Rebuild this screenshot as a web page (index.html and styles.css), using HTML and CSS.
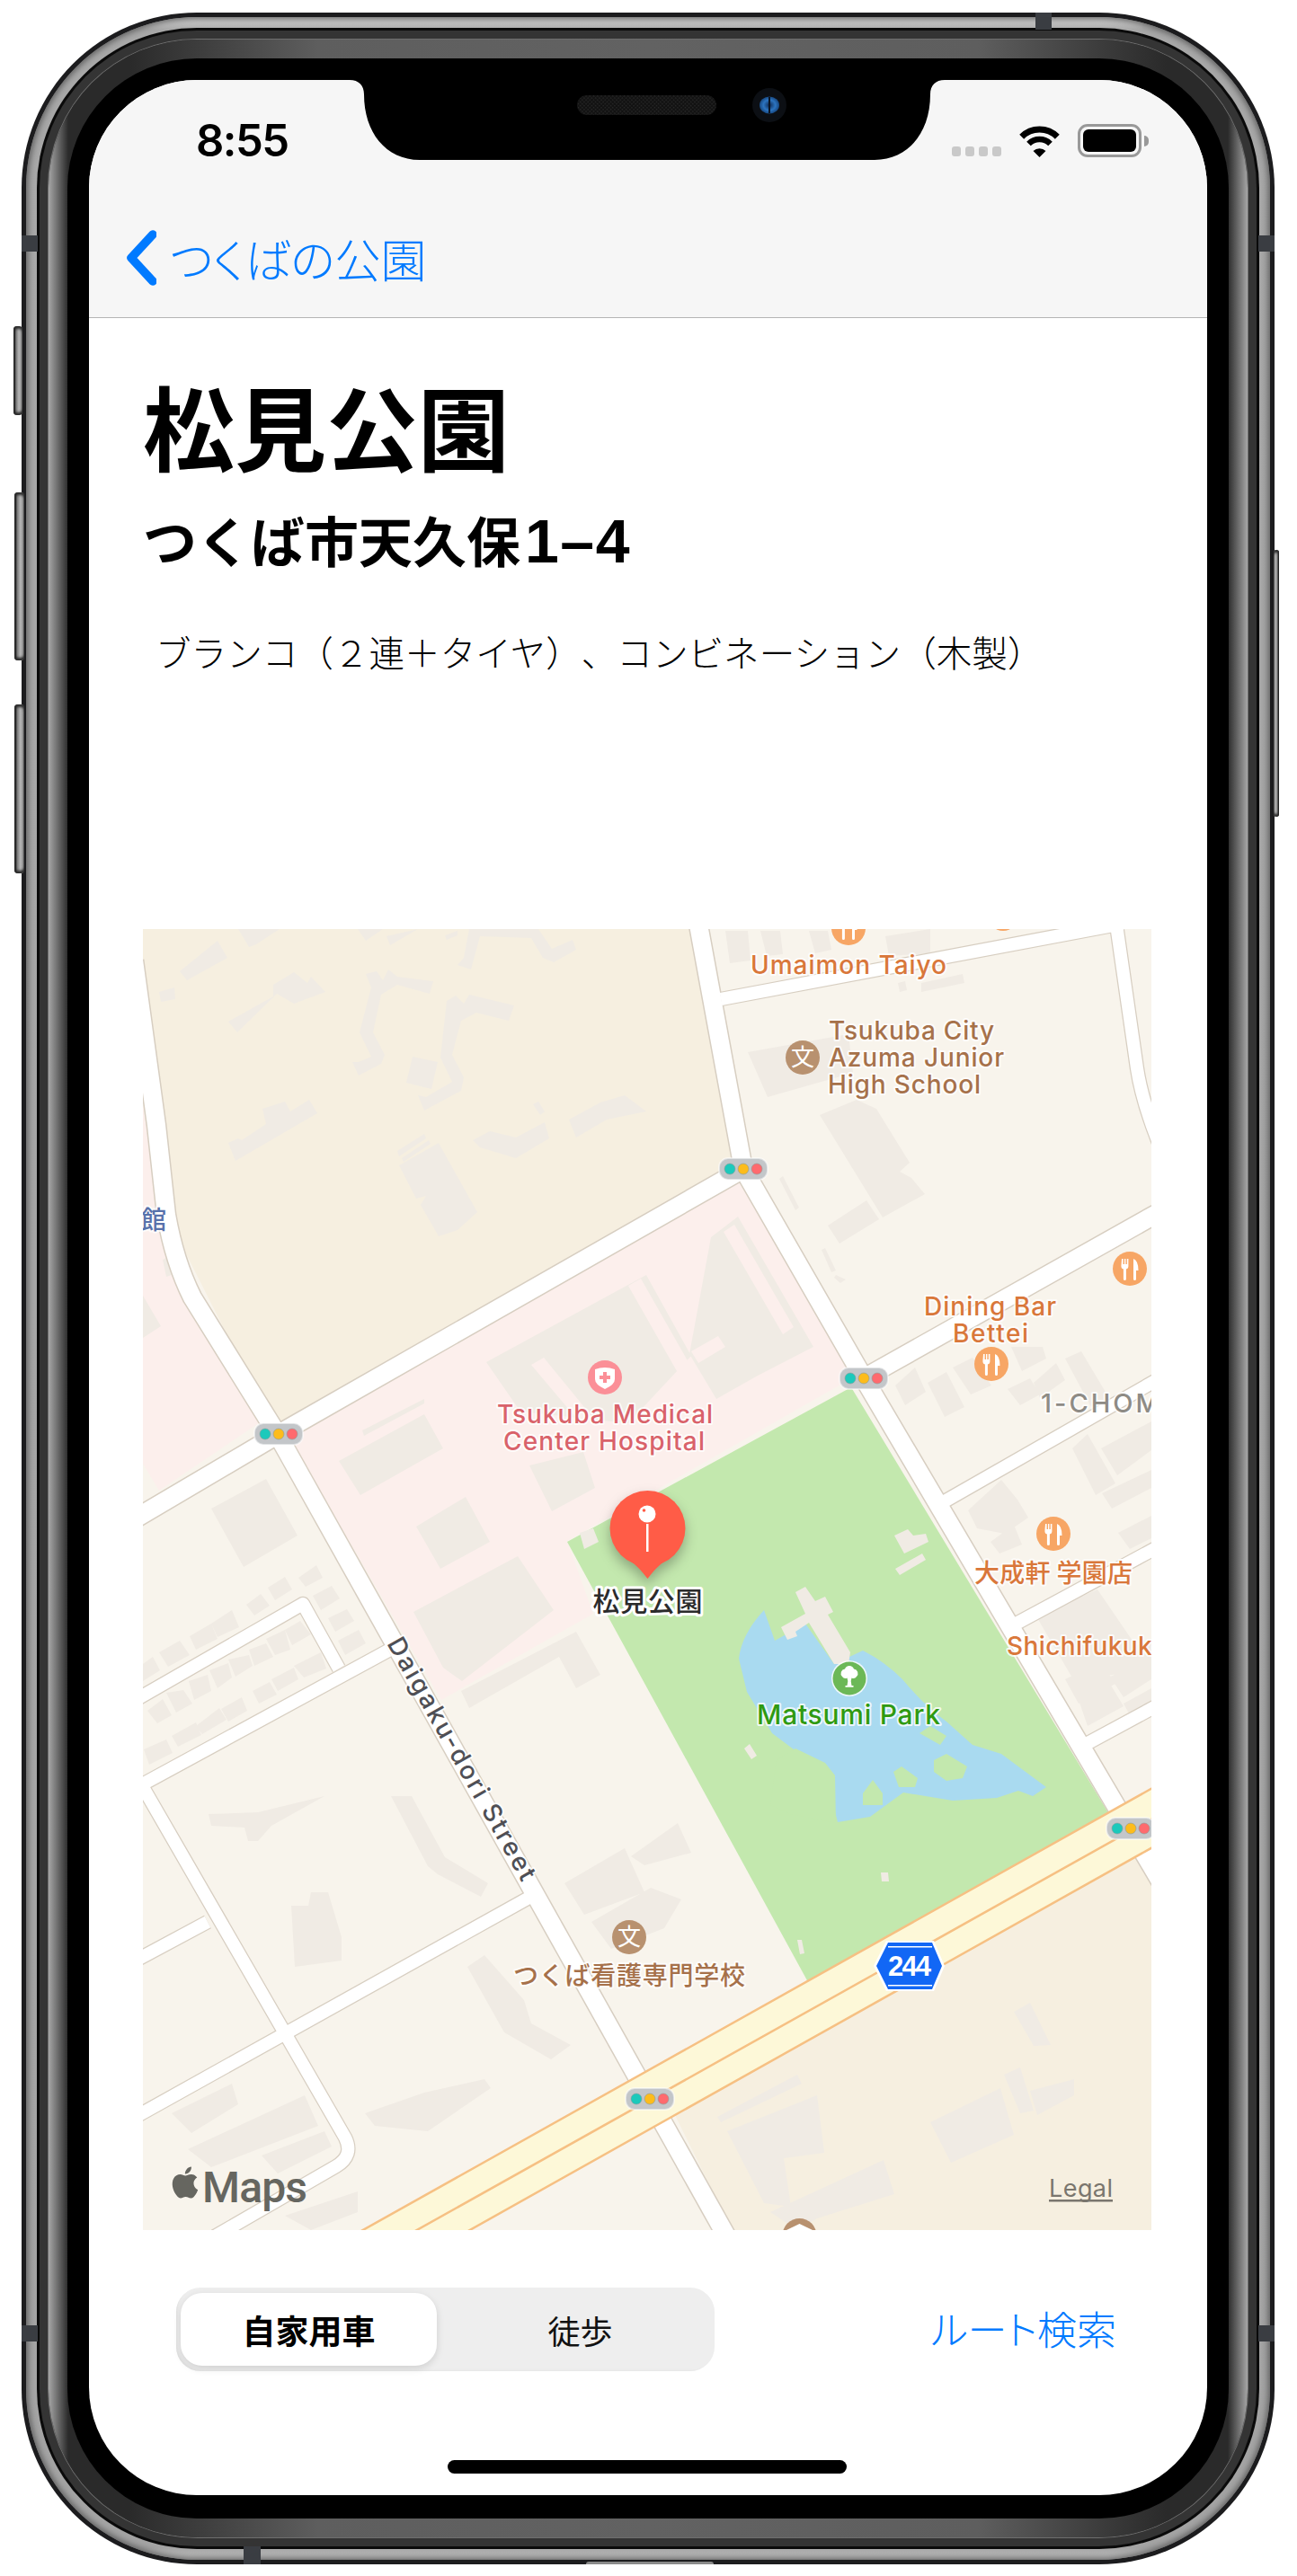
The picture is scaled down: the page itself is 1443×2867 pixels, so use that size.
FILE: index.html
```html
<!DOCTYPE html>
<html lang="ja">
<head>
<meta charset="utf-8">
<title>松見公園</title>
<link rel="stylesheet" href="styles.css">
</head>
<body>
<div class="phone">
  <span class="side silent"></span>
  <span class="side vol-up"></span>
  <span class="side vol-down"></span>
  <span class="side power"></span>
  <div class="shell">
    <div class="metal">
      <div class="gap">
        <div class="band">
          <div class="rim">
            <div class="bezel">
              <div class="screen">
                <svg class="notch" viewBox="0 0 662 89" width="662" height="89">
                  <defs>
                    <pattern id="mesh" width="3" height="3" patternUnits="userSpaceOnUse" patternTransform="rotate(45)">
                      <rect width="3" height="3" fill="#111"/>
                      <rect width="1.5" height="1.5" fill="#2a2a2a"/>
                    </pattern>
                    <radialGradient id="lens" cx="50%" cy="50%" r="55%">
                      <stop offset="0" stop-color="#0e2a55"/>
                      <stop offset=".55" stop-color="#2c74c0"/>
                      <stop offset="1" stop-color="#123c70"/>
                    </radialGradient>
                  </defs>
                  <path d="M0 0H662C652 0 646 6 646 16C646 58 622 89 584 89H78C40 89 16 58 16 16C16 6 10 0 0 0Z" fill="#000"/>
                  <rect x="253" y="17" width="155" height="22" rx="11" fill="url(#mesh)"/>
                  <circle cx="467" cy="28" r="19" fill="#0c0f14"/>
                  <ellipse cx="467" cy="28" rx="11" ry="9.5" fill="url(#lens)"/>
                  <rect x="466" y="19" width="2" height="18" fill="#0a1524"/>
                </svg>
                <header class="nav">
                  <div class="status">
                    <span class="time">8:55</span>
                    <div class="status-icons">
                      <div class="signal"><i></i><i></i><i></i><i></i></div>
                      <svg class="wifi" viewBox="0 0 47 36" width="47" height="36">
                        <path d="M3.7 13.2A28 28 0 0 1 43.3 13.2" fill="none" stroke="#000" stroke-width="7"/>
                        <path d="M11.5 21A17 17 0 0 1 35.5 21" fill="none" stroke="#000" stroke-width="6.5"/>
                        <path d="M23.5 36L16.5 29A10 10 0 0 1 30.5 29Z" fill="#000"/>
                      </svg>
                      <div class="battery"><span class="battery-fill"></span></div>
                      <span class="battery-tip"></span>
                    </div>
                  </div>
                  <div class="back">
                    <svg class="chevron" viewBox="0 0 36 62" width="36" height="62">
                      <path d="M32 5L8 31L32 57" fill="none" stroke="#007aff" stroke-width="9.5" stroke-linecap="round" stroke-linejoin="round"/>
                    </svg>
                    <span class="back-label">つくばの公園</span>
                  </div>
                </header>
                <main class="content">
                  <h1 class="title">松見公園</h1>
                  <h2 class="address">つくば市天久保<span class="address-num">1–4</span></h2>
                  <p class="equipment">ブランコ（２連＋タイヤ）、コンビネーション（木製）</p>
                  <svg class="map" viewBox="160 1035 1122 1448" width="1122" height="1448">
                    <defs>
                      <g id="roads-main">
                        <path d="M150 1070L175 1253L186 1353Q195 1405 215 1445L310 1598"/>
                        <path d="M140 1698L311 1597L828 1302"/>
                        <path d="M310 1598L815 2500"/>
                        <path d="M778 1030L828 1302L962 1535L1310 2125"/>
                        <path d="M962 1535L1300 1345"/>
                      </g>
                      <g id="roads-small">
                        <path d="M803 1113L1250 1029"/>
                        <path d="M1243 1030L1266 1190Q1272 1230 1295 1285"/>
                        <path d="M1043 1677L1300 1530"/>
                        <path d="M1124 1812L1300 1717"/>
                        <path d="M1202 1946L1300 1893"/>
                        <path d="M150 1894L338 1786L378 1858"/>
                        <path d="M433 1838L150 1992"/>
                        <path d="M160 1990L385 2380Q395 2400 375 2412L240 2490"/>
                        <path d="M595 2110L150 2358"/>
                        <path d="M232 2140L150 2184"/>
                      </g>
                      <g id="traffic">
                        <rect x="-27" y="-12" width="54" height="24" rx="10" class="tl-box"/>
                        <circle cx="-15" r="6" class="tl-g"/>
                        <circle r="6" class="tl-y"/>
                        <circle cx="15" r="6" class="tl-r"/>
                      </g>
                      <g id="food">
                        <circle r="19" class="poi-food"/>
                        <path class="poi-glyph" d="M-9 -11h1.6v6h1.4v-6h1.4v6h1.4v-6h1.6v8q0 3-2.5 3.5v11a1.5 1.5 0 0 1-3 0v-11q-2.5-.5-2.5-3.5zM4 -11q5.500 2 5.500 13h-2.500v9.500a1.500 1.500 0 0 1-3 0z"/>
                      </g>
                    </defs>

                    <rect class="m-res" x="160" y="1035" width="1122" height="1448"/>
                    <polygon class="m-campus" points="160,1035 775,1035 825,1300 310,1598 186,1353 160,1080"/>
                    <polygon class="m-campus" points="752,2355 1300,2040 1300,2483 815,2483"/>
                    <polygon class="m-pink" points="322,1600 820,1312 952,1533 632,1716 661,1797 492,1893"/>
                    <polygon class="m-pink" points="160,1230 178,1350 296,1580 178,1660 160,1630"/>
                    <polygon class="m-park" points="632,1717 948,1545 1238,2025 900,2207"/>
                    <path class="m-water" d="M851 1793L863 1827L897 1808L929 1853L961 1838Q985 1850 1005 1870Q1030 1900 1054 1917L1083 1943L1115 1953L1165 1990L1150 2000L1134 1994L1110 2002L1061 2005L1006 1996L969 2023L933 2029L924 1994L896 1957L860 1930L832 1884L823 1847Q826 1820 851 1793Z"/>
                    <path class="m-park" d="M858 2010L865 1960L886 1947L919 1963L930 1977L931 2030L880 2020ZM1024 1930L1036 1922L1054 1933L1047 1943ZM1040 1960L1054 1953L1077 1967L1072 1980L1054 1983L1040 1973ZM995 1973L1004 1967L1022 1980L1019 1990L1001 1990ZM961 2010L961 1997L972 1982L983 1997L983 2010Z"/>

                    <path class="m-bld" d="M201 1082L243 1048L254 1067L209 1092ZM178 1105L195 1100L196 1113L180 1116ZM255 1138L305 1110L305 1097L328 1083L343 1095L347 1088L363 1105L328 1118L309 1107L265 1150ZM408 1085L420 1082L427 1092L433 1080L443 1088L483 1093L479 1107L443 1097L425 1108L416 1150L429 1175L425 1185L400 1198L393 1183L400 1183L414 1177L401 1150L414 1100ZM498 1115L508 1109L517 1118L523 1108L573 1120L567 1137L531 1128L514 1137L504 1175L517 1200L514 1215L473 1237L466 1220L475 1222L504 1205L491 1178ZM460 1177L488 1183L481 1213L453 1206ZM266 1035L312 1035L286 1052L278 1055ZM399 1035L427 1035L408 1048ZM431 1043L466 1035L435 1053ZM496 1042L510 1037L510 1042L498 1047ZM523 1035L600 1035L615 1057L638 1047L642 1058L617 1072L605 1067L592 1045L535 1043L525 1080L510 1075L517 1067ZM255 1273L266 1268L270 1270L297 1252L293 1235L318 1227L324 1238L345 1225L354 1240L263 1293ZM445 1298L489 1273L532 1350L510 1370L489 1377L469 1342L475 1332L464 1335ZM443 1282L473 1263L475 1268L445 1288ZM448 1290L478 1270L480 1274L450 1294ZM527 1270L546 1260L575 1267L607 1250L612 1268L575 1290L535 1278ZM634 1247L669 1228L696 1220L720 1238L676 1247L642 1267ZM594 1230L600 1227L607 1238L602 1242Z"/>
                    <path class="m-bld" d="M833 1172L945 1152L950 1195L855 1222ZM913 1242L954 1225L976 1235L1013 1295L1002 1305L1015 1312L1030 1330L983 1356ZM922 1365L965 1337L979 1358L935 1385ZM868 1313L872 1310L890 1345L886 1348ZM915 1392L919 1390L931 1415L926 1417ZM931 1420L942 1425L936 1429L929 1423ZM808 1037L833 1037L836 1070L813 1073ZM847 1037L869 1037L872 1063L854 1065ZM901 1037L922 1037L926 1058L908 1062ZM986 1043L1036 1035L1036 1062L990 1065ZM1026 1095L1072 1085L1074 1095L1026 1105ZM1000 1095L1008 1093L1010 1103L1002 1105Z"/>
                    <path class="m-bld" d="M792 1378L822 1355L906 1500L844 1532L798 1558L768 1508ZM542 1517L720 1420L770 1510L700 1585L580 1572ZM590 1632L650 1617L663 1657L615 1683ZM378 1627L473 1575L494 1613L402 1665ZM404 1593L473 1558L473 1563L406 1599ZM464 1700L519 1667L546 1717L491 1747ZM461 1795L577 1733L617 1793L515 1872L494 1857ZM182 1403L188 1400L192 1420L186 1422ZM160 1443L180 1477L160 1490Z"/>
                    <path class="m-pink" d="M806 1372L818 1364L884 1478L872 1486ZM700 1432L714 1424L772 1526L758 1534ZM770 1505L800 1488L808 1500L778 1518ZM592 1520L606 1512L660 1578L646 1584Z"/>
                    <path class="m-bld" d="M236 1680L297 1647L332 1710L272 1745ZM333 1757L353 1743L360 1757L341 1767ZM299 1768L318 1756L326 1770L307 1782ZM275 1787L291 1775L301 1788L284 1799ZM349 1777L370 1766L379 1780L358 1793ZM366 1802L387 1792L395 1805L374 1817ZM377 1827L400 1815L408 1830L385 1843ZM236 1808L259 1793L267 1812L243 1823ZM212 1822L236 1808L243 1825L219 1837ZM178 1840L201 1827L212 1843L188 1856ZM160 1853L171 1845L179 1860L160 1872ZM318 1815L335 1805L347 1820L326 1832ZM297 1825L318 1815L324 1837L307 1843ZM278 1837L297 1830L305 1845L284 1855ZM255 1848L278 1843L282 1855L263 1867ZM234 1860L255 1852L259 1868L243 1880ZM211 1872L232 1865L236 1883L217 1893ZM186 1885L205 1882L215 1897L197 1907ZM165 1905L182 1892L192 1910L176 1919ZM328 1855L358 1840L364 1858L339 1868ZM303 1870L328 1857L333 1870L310 1883ZM282 1883L301 1873L309 1887L289 1897ZM247 1903L270 1890L276 1905L255 1917ZM219 1922L245 1902L253 1915L226 1931ZM192 1933L219 1918L225 1932L199 1945ZM161 1948L186 1937L193 1952L167 1965ZM514 1883L642 1817L669 1865L642 1880L623 1845L523 1902Z"/>
                    <path class="m-bld" d="M996 1710L1011 1703L1017 1710L1031 1708L1034 1717L1007 1730ZM997 1747L1027 1730L1031 1737L1002 1754ZM886 1773L897 1767L908 1783L919 1778L928 1795L922 1798L947 1840L945 1853L929 1853L901 1807L886 1817L888 1822L877 1826L870 1812L897 1797ZM829 1947L835 1942L843 1955L837 1959ZM981 2085L989 2085L990 2095L982 2095ZM888 2160L893 2160L896 2175L891 2176ZM646 1707L661 1702L667 1717L651 1725Z"/>
                    <path class="m-bld" d="M997 1543L1019 1523L1031 1550L1008 1565ZM1033 1540L1054 1528L1074 1567L1052 1578ZM1061 1523L1083 1512L1104 1543L1081 1553ZM1122 1547L1147 1535L1158 1553L1136 1565ZM1151 1540L1176 1518L1186 1537L1158 1557ZM1186 1513L1204 1505L1235 1557L1215 1567ZM1126 1500L1161 1500L1165 1513L1138 1527ZM1194 1613L1211 1597L1242 1652L1220 1665ZM1226 1613L1282 1583L1282 1615L1244 1643ZM1227 1663L1282 1637L1282 1657L1238 1680ZM1078 1682L1115 1648L1133 1670L1145 1690L1119 1708L1088 1702ZM1103 1717L1129 1698L1138 1720L1113 1730ZM1245 1707L1282 1688L1282 1713L1258 1725ZM1154 1800L1222 1770L1265 1833L1282 1825L1282 1860L1195 1870ZM1186 1870L1226 1850L1242 1875L1201 1897ZM1236 1867L1282 1847L1282 1870L1251 1890ZM1201 1893L1236 1875L1251 1900L1211 1922ZM1251 1897L1282 1880L1282 1893L1258 1910Z"/>
                    <path class="m-bld" d="M233 2020L288 2018L362 2000L303 2033L288 2050L277 2050L273 2035L236 2033ZM436 2000L459 2000L496 2068L544 2097L536 2112L488 2087L477 2078ZM325 2122L344 2122L347 2107L366 2107L381 2157L381 2183L329 2190ZM629 2097L696 2058L718 2107L651 2132ZM703 2067L755 2030L770 2063L718 2077ZM659 2140L725 2102L759 2115L740 2147L681 2170ZM521 2190L540 2177L584 2227L592 2253L636 2277L614 2293L562 2263ZM407 2353L473 2330L540 2315L547 2325L477 2373L418 2367ZM192 2353L259 2320L266 2343L214 2375ZM210 2393L340 2333L355 2367L236 2413ZM292 2400L362 2373L370 2390L310 2420ZM318 2467L399 2440L399 2463L347 2483ZM1036 2363L1114 2325L1129 2377L1059 2408ZM810 2373L910 2333L918 2397L873 2403L881 2457L851 2453ZM858 2463L984 2405L996 2443L910 2470L888 2483ZM799 2357L888 2310L893 2320L803 2363ZM1129 2240L1147 2230L1170 2277L1151 2278ZM1118 2310L1136 2302L1151 2350L1136 2353ZM1147 2328L1196 2315L1196 2333L1155 2355Z"/>

                    <use href="#roads-small" class="road-casing thin"/>
                    <use href="#roads-main" class="road-casing wide"/>
                    <use href="#roads-small" class="road-fill thin"/>
                    <use href="#roads-main" class="road-fill wide"/>

                    <polygon class="hw-fill" points="394,2489 1310,1976 1310,2042 513,2489"/>
                    <path class="hw-line" d="M394 2489L1310 1976M454 2489L1310 2010M513 2489L1310 2042"/>

                    <use href="#traffic" x="828" y="1302"/>
                    <use href="#traffic" x="311" y="1597"/>
                    <use href="#traffic" x="962" y="1535"/>
                    <use href="#traffic" x="1259" y="2036"/>
                    <use href="#traffic" x="724" y="2337"/>

                    <use href="#food" x="945" y="1034"/>
                    <circle cx="1117" cy="1020" r="17" class="poi-food"/>
                    <use href="#food" x="1258" y="1413"/>
                    <use href="#food" x="1104" y="1519"/>
                    <use href="#food" x="1173" y="1708"/>

                    <circle cx="894" cy="1178" r="19" class="poi-school"/>
                    <text x="894" y="1187" class="poi-char">文</text>
                    <circle cx="701" cy="2157" r="19" class="poi-school"/>
                    <text x="701" y="2166" class="poi-char">文</text>
                    <circle cx="890.500" cy="2489" r="19" class="poi-school"/>
                    <path class="poi-glyph" d="M876 2483L890.500 2476L905 2483L905 2490L876 2490Z"/>

                    <circle cx="674" cy="1534" r="19" class="poi-hosp"/>
                    <path class="poi-glyph" d="M663 1525Q674 1521 685 1525V1536Q685 1542 674 1547Q663 1542 663 1536Z"/>
                    <path class="poi-hosp" d="M672 1528H676V1532H680V1536H676V1540H672V1536H668V1532H672Z"/>

                    <circle cx="946" cy="1869" r="20" class="poi-ring"/>
                    <circle cx="946" cy="1869" r="18.500" class="poi-park"/>
                    <path class="poi-glyph" d="M946 1855a5.500 5.500 0 0 1 5 3.500a5 5 0 0 1 3 8.500a4.500 4.500 0 0 1-5.500 1.500l-.8 3.500l.8 5h2v1.800h-9v-1.800h2l.8-5l-.8-3.500a4.500 4.500 0 0 1-5.500-1.500a5 5 0 0 1 3-8.500a5.500 5.500 0 0 1 5-3.500z"/>

                    <polygon points="987,2161 1040,2161 1052,2189 1040,2217 987,2217 973,2189" fill="#fff"/>
                    <polygon points="989,2163 1038,2163 1049,2189 1038,2215 989,2215 976,2189" fill="#1267f5"/>
                    <rect x="989" y="2167" width="49" height="1.500" fill="#fff"/>
                    <rect x="989" y="2210" width="49" height="1.500" fill="#fff"/>
                    <text class="lbl-shield" x="1013" y="2200" textLength="48">244</text>

                    <text class="lbl l-food" x="836" y="1085" textLength="218">Umaimon Taiyo</text>
                    <text class="lbl l-school" x="923" y="1158" textLength="184">Tsukuba City</text>
                    <text class="lbl l-school" x="923" y="1188" textLength="195">Azuma Junior</text>
                    <text class="lbl l-school" x="922" y="1218" textLength="170">High School</text>
                    <text class="lbl l-food" x="1029" y="1465" textLength="147">Dining Bar</text>
                    <text class="lbl l-food" x="1061" y="1495" textLength="84">Bettei</text>
                    <text class="lbl l-hosp" x="554" y="1585" textLength="240">Tsukuba Medical</text>
                    <text class="lbl l-hosp" x="561" y="1615" textLength="224">Center Hospital</text>
                    <text class="lbl l-area" x="1159" y="1573">1-CHOME</text>
                    <text class="lbl-cjk l-food" x="1085" y="1762" textLength="176">大成軒 学園店</text>
                    <text class="lbl l-food" x="1121" y="1843" textLength="195">Shichifukuken</text>
                    <text class="lbl l-park" x="843" y="1920" textLength="204">Matsumi Park</text>
                    <text class="lbl-cjk l-school" x="572" y="2210" textLength="258">つくば看護専門学校</text>
                    <text class="lbl-cjk l-blue" x="158" y="1369">館</text>
                    <text class="lbl l-street" transform="translate(431 1830) rotate(60.500)" textLength="306">Daigaku-dori Street</text>

                    <g class="pin-shadow">
                      <circle cx="721.500" cy="1702" r="42" class="pin"/>
                      <path class="pin" d="M695 1733C707 1741 714 1748 721.500 1758C729 1748 736 1741 748 1733Z"/>
                    </g>
                    <circle cx="721" cy="1686" r="9.500" class="poi-glyph"/>
                    <circle cx="717.500" cy="1682" r="1.800" class="pin"/>
                    <rect x="720" y="1697" width="2.500" height="31" class="poi-glyph"/>
                    <text class="lbl-pin" x="721.500" y="1794" textLength="122">松見公園</text>

                    <g transform="translate(186 2409) scale(1.750)"><path class="logo" d="M18.710 19.500c-.83 1.240-1.710 2.450-3.050 2.470-1.340.03-1.770-.79-3.290-.79-1.530 0-2 .77-3.270.82-1.310.05-2.300-1.320-3.140-2.530C4.250 17 2.940 12.450 4.700 9.390c.87-1.520 2.430-2.480 4.120-2.510 1.280-.02 2.500.87 3.290.87.78 0 2.260-1.070 3.810-.91.65.03 2.470.26 3.640 1.980-.09.06-2.170 1.280-2.150 3.810.03 3.020 2.650 4.030 2.680 4.040-.03.07-.42 1.440-1.380 2.830M13 3.500c.73-.83 1.940-1.460 2.940-1.500.13 1.170-.34 2.350-1.040 3.190-.69.85-1.830 1.510-2.950 1.420-.15-1.150.41-2.350 1.050-3.110z"/></g>
                    <text class="maps-word" x="226" y="2452" textLength="116">Maps</text>
                    <text class="legal" x="1168" y="2446" textLength="71">Legal</text>
                    <rect class="legal-line" x="1168" y="2449" width="71" height="2.500"/>
                  </svg>
                  <div class="controls">
                    <div class="segmented">
                      <span class="seg seg-active">自家用車</span>
                      <span class="seg">徒歩</span>
                    </div>
                    <span class="route">ルート検索</span>
                  </div>
                </main>
                <div class="home-bar"></div>
              </div>
            </div>
          </div>
        </div>
      </div>
    </div>
    <span class="ant ant-top"></span>
    <span class="ant ant-bottom"></span>
    <span class="ant ant-lt"></span>
    <span class="ant ant-rt"></span>
    <span class="ant ant-lb"></span>
    <span class="ant ant-rb"></span>
    <span class="bottom-lip"></span>
  </div>
</div>
</body>
</html>
```

FILE: styles.css
```css
* { box-sizing: border-box; }
html, body { margin: 0; padding: 0; background: #fff; }
body {
  width: 1443px;
  height: 2867px;
  padding: 14px 0 0 24px;
  overflow: hidden;
  font-family: "Noto Sans CJK JP", "Liberation Sans", sans-serif;
}

.phone { position: relative; width: 1394px; height: 2840px; }

.shell {
  position: relative;
  height: 100%;
  padding: 5px;
  border-radius: 195px;
  background: #1c1c1e;
}
.metal {
  height: 100%;
  padding: 12px;
  border-radius: 190px;
  background: linear-gradient(180deg, #dcdcdc 0, #a8a8a8 14px, #a4a4a4 calc(100% - 14px), #c4c4c4 100%);
  box-shadow: inset 0 0 7px 2px #5c5c5c;
}
.gap {
  height: 100%;
  padding: 3px;
  border-radius: 178px;
  background: #0a0a0a;
}
.band {
  height: 100%;
  padding: 10px;
  border-radius: 175px;
  background: #343434;
}
.rim {
  height: 100%;
  padding: 21px;
  border-radius: 165px;
  background: linear-gradient(90deg, #a6a6a6 0, #2a2a2a 22px, #2a2a2a 90px, #5e5e5e 300px, #626262 50%, #5e5e5e calc(100% - 300px), #2a2a2a calc(100% - 90px), #2a2a2a calc(100% - 22px), #a6a6a6 100%);
  box-shadow: 0 0 0 1px #6e6e6e;
}
.bezel {
  height: 100%;
  padding: 24px;
  border-radius: 144px;
  background: #000;
}
.screen {
  position: relative;
  height: 2688px;
  border-radius: 120px;
  overflow: hidden;
  background: #fff;
  display: flex;
  flex-direction: column;
}

.notch { position: absolute; top: 0; left: 290px; z-index: 2; display: block; }

/* nav */
.nav {
  height: 265px;
  flex: none;
  background: #f6f6f6;
  border-bottom: 1px solid #b4b4b4;
  display: flex;
  flex-direction: column;
}
.status {
  margin-top: 49px;
  height: 37px;
  padding: 0 65px 0 119px;
  display: flex;
  justify-content: space-between;
  align-items: center;
}
.time {
  font-family: Inter, "Liberation Sans", sans-serif;
  font-size: 49px;
  font-weight: 600;
  line-height: 37px;
  letter-spacing: -1.500px;
  color: #000;
}
.status-icons { display: flex; align-items: center; gap: 19px; }
.signal { display: flex; gap: 5px; align-self: flex-end; margin-bottom: 1px; }
.signal i { display: block; width: 10px; height: 11px; border-radius: 3px; background: #c9c9c9; }
.wifi { display: block; }
.battery {
  width: 71px;
  height: 37px;
  padding: 3px;
  border: 3px solid #999;
  border-radius: 11px;
  display: flex;
}
.battery-fill { flex: 1; background: #000; border-radius: 6px; }
.battery-tip {
  width: 5px;
  height: 12px;
  margin-left: -16px;
  background: #999;
  border-radius: 0 5px 5px 0;
}
.back {
  margin-top: 81px;
  padding-left: 39px;
  display: flex;
  align-items: center;
  gap: 15px;
  height: 62px;
}
.chevron { display: block; }
.back-label {
  font-size: 51px;
  line-height: 62px;
  font-weight: 300;
  font-feature-settings: "palt";
  color: #007aff;
}

/* content */
.content { position: relative; flex: 1; padding: 68px 60px 0; display: flex; flex-direction: column; align-items: flex-start; }
.title { margin: 0; font-size: 102px; line-height: 102px; font-weight: 700; color: #000; }
.address { margin: 46px 0 0; font-size: 60px; line-height: 60px; font-weight: 700; color: #000; white-space: nowrap; }
.address-num { font-family: "Liberation Sans", sans-serif; font-size: 68px; letter-spacing: 1.500px; margin-left: 5px; }
.equipment { margin: 73px 0 0; padding-left: 14px; font-size: 39.600px; line-height: 39px; font-weight: 300; color: #000; white-space: nowrap; text-spacing-trim: space-all; }

.map { display: block; flex: none; margin-top: 290px; }
.lbl-shield { font-family: "Liberation Sans", sans-serif; font-weight: 700; font-size: 31px; fill: #fff; text-anchor: middle; }

.m-res { fill: #f8f4ec; }
.m-campus { fill: #f6efe0; }
.m-pink { fill: #fcefec; }
.m-park { fill: #c3e8ae; }
.m-water { fill: #a9daf0; }
.m-bld { fill: #f0ebe4; }
.road-casing { fill: none; stroke: #d7cec1; stroke-linejoin: round; }
.road-fill { fill: none; stroke: #fff; stroke-linejoin: round; }
.road-casing.wide { stroke-width: 23; }
.road-fill.wide { stroke-width: 20; }
.road-casing.thin { stroke-width: 16.500; }
.road-fill.thin { stroke-width: 14; }
.hw-fill { fill: #fdf8d8; }
.hw-line { fill: none; stroke: #f6c083; stroke-width: 2.500; }

.tl-box { fill: #c3c6c9; stroke: #fff; stroke-opacity: .5; stroke-width: 2; }
.tl-g { fill: #1cc9bb; stroke: #8b9a98; stroke-width: .6; }
.tl-y { fill: #fdbc1c; stroke: #8b9a98; stroke-width: .6; }
.tl-r { fill: #ff6a6e; stroke: #8b9a98; stroke-width: .6; }

.poi-food { fill: #f7a665; }
.poi-school { fill: #b8916f; }
.poi-hosp { fill: #fb8f97; }
.poi-park { fill: #6cb857; }
.poi-ring { fill: #fff; fill-opacity: .8; }
.poi-glyph { fill: #fff; }
.poi-char { font-family: "Noto Sans CJK JP", sans-serif; font-size: 26px; fill: #fff; text-anchor: middle; }

.lbl, .lbl-cjk, .lbl-pin {
  paint-order: stroke;
  stroke: #fff;
  stroke-opacity: .8;
  stroke-width: 4px;
  stroke-linejoin: round;
}
.lbl { font-family: Inter, "Liberation Sans", sans-serif; font-size: 28px; font-weight: 500; }
.lbl-cjk { font-family: "Noto Sans CJK JP", sans-serif; font-size: 28px; font-weight: 500; }
.lbl-pin { font-family: "Noto Sans CJK JP", sans-serif; font-size: 30px; font-weight: 500; fill: #2b2b2b; text-anchor: middle; stroke-opacity: 1; stroke-width: 6px; }
.l-food { fill: #d9773a; }
.l-school { fill: #a6714a; }
.l-hosp { fill: #d9626a; }
.l-park { fill: #2f9a11; font-size: 30px; }
.l-area { fill: #8e8b85; font-size: 29px; letter-spacing: 3px; }
.l-blue { fill: #5771ab; }
.l-street { fill: #4f4f55; font-size: 28px; }
.pin { fill: #ff5c47; }
.pin-shadow { filter: drop-shadow(0 7px 7px rgba(0, 0, 0, .28)); }
.logo { fill: #666660; }
.maps-word { font-family: Roboto, "Liberation Sans", sans-serif; font-size: 48px; font-weight: 500; fill: #666660; letter-spacing: -1px; }
.legal { font-family: Inter, "Liberation Sans", sans-serif; font-size: 27px; fill: #7a766e; }
.legal-line { fill: #7a766e; }

/* controls */
.controls {
  margin: 64px 0 0 37px;
  width: 1046px;
  display: flex;
  justify-content: space-between;
  align-items: center;
}
.segmented {
  width: 599px;
  height: 93px;
  padding: 6px 0 6px 5px;
  border-radius: 27px;
  background: #eeeeee;
  display: flex;
  box-shadow: inset 3px -2px 3px -2px #dddddd;
}
.seg {
  width: 285px;
  display: flex;
  align-items: center;
  justify-content: center;
  font-size: 36px;
  font-weight: 400;
  color: #111;
}
.seg + .seg { flex: 1; padding-left: 10px; }
.seg-active {
  background: #fff;
  border-radius: 24px;
  font-size: 37px;
  font-weight: 700;
  color: #000;
  box-shadow: 0 3px 8px rgba(0, 0, 0, .13);
}
.route { font-size: 44px; line-height: 44px; font-weight: 300; font-feature-settings: "palt"; color: #007aff; margin-top: -4px; }

.home-bar {
  position: absolute;
  left: 399px;
  top: 2649px;
  width: 444px;
  height: 15px;
  border-radius: 8px;
  background: #000;
}

/* hardware details over the frame */
.ant { position: absolute; background: #3a3d42; }
.ant-top { left: 1128px; top: 0; width: 18px; height: 19px; }
.ant-bottom { left: 247px; bottom: 0; width: 19px; height: 20px; }
.ant-lt { left: 0; top: 248px; width: 18px; height: 18px; }
.ant-rt { right: 0; top: 248px; width: 18px; height: 18px; }
.ant-lb { left: 0; top: 2574px; width: 18px; height: 18px; }
.ant-rb { right: 0; top: 2574px; width: 18px; height: 18px; }
.bottom-lip { position: absolute; left: 628px; bottom: 0; width: 142px; height: 3px; border-radius: 3px 3px 0 0; background: #8a8a8a; }

.side {
  position: absolute;
  z-index: 1;
  background: linear-gradient(90deg, #262626 0, #262626 12%, #7a7a7a 30%, #b5b5b5 60%, #9a9a9a 85%, #4c4c4c 100%);
  border-radius: 4px;
  box-shadow: inset 0 4px 3px -1px #2a2a2a, inset 0 -4px 3px -1px #2a2a2a;
}
.silent { left: -9px; top: 349px; width: 10px; height: 99px; }
.vol-up { left: -8px; top: 534px; width: 11px; height: 187px; }
.vol-down { left: -8px; top: 770px; width: 11px; height: 188px; }
.power { right: -5px; top: 598px; width: 6px; height: 297px; transform: scaleX(-1); }
```
